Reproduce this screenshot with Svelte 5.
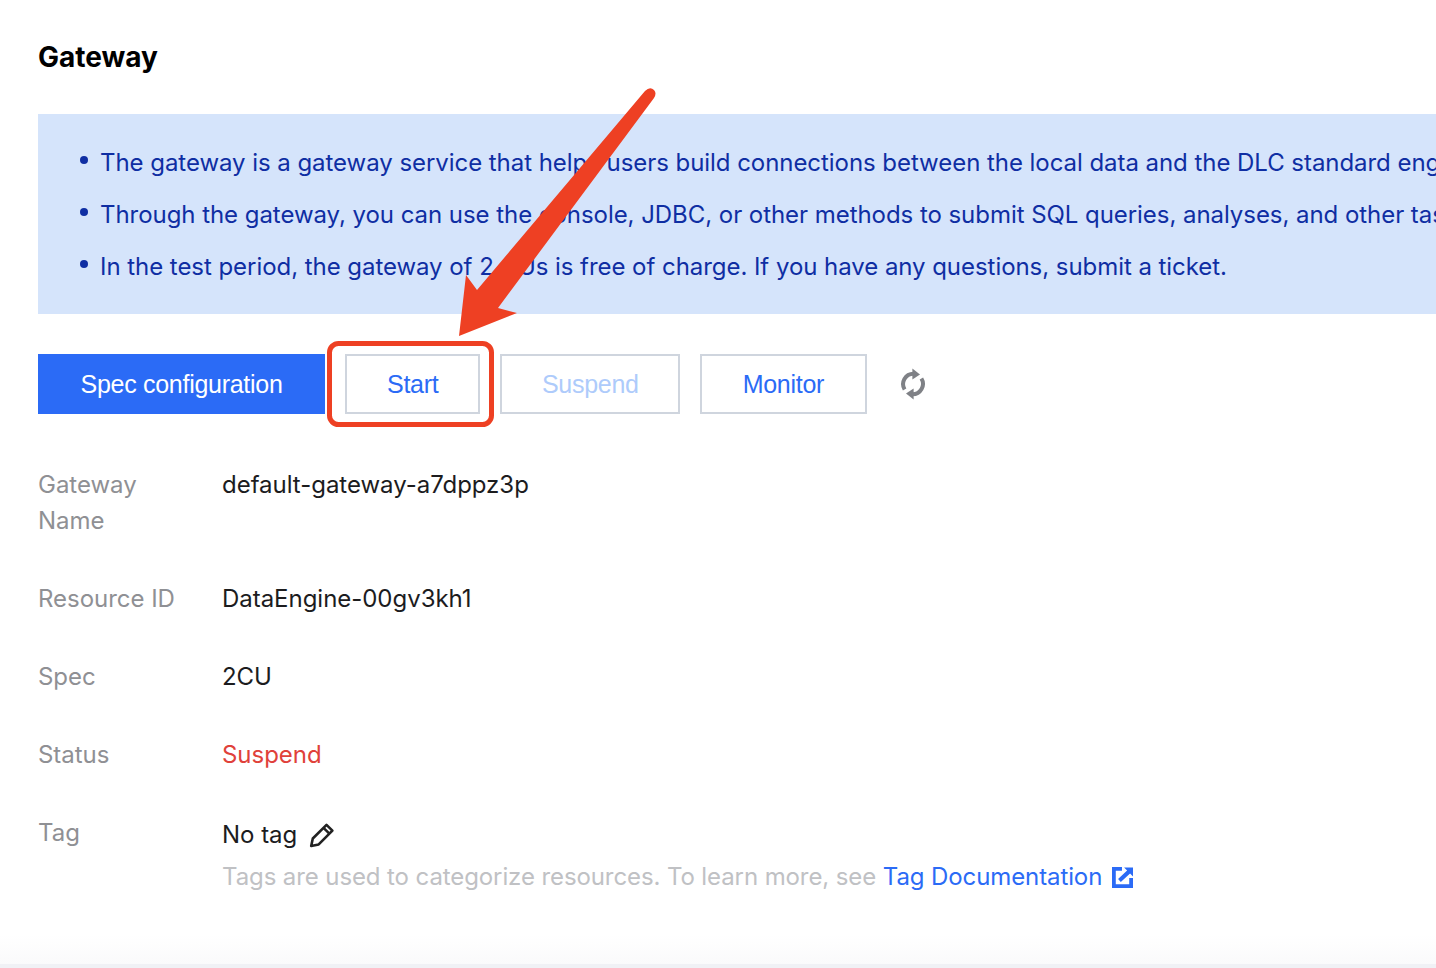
<script lang="ts">
  const notes = [
    "The gateway is a gateway service that helps users build connections between the local data and the DLC standard engine.",
    "Through the gateway, you can use the console, JDBC, or other methods to submit SQL queries, analyses, and other tasks.",
    "In the test period, the gateway of 2 CUs is free of charge. If you have any questions, submit a ticket."
  ];
</script>

<div class="page">
  <main class="panel">
    <h1>Gateway</h1>

    <ul class="notice">
      {#each notes as note}
        <li>{note}</li>
      {/each}
    </ul>

    <div class="toolbar">
      <button class="btn primary">Spec configuration</button>
      <button class="btn start">Start</button>
      <button class="btn" disabled>Suspend</button>
      <button class="btn">Monitor</button>
      <button class="refresh" aria-label="Refresh">
        <svg width="28" height="32" viewBox="0 0 28 32" fill="none">
          <path d="M5.6 21.5A10.4 10.4 0 0 1 14.5 5.7" stroke="#7f8186" stroke-width="4" />
          <path d="M22.4 10.5A10.4 10.4 0 0 1 13.5 26.3" stroke="#7f8186" stroke-width="4" />
          <path d="M13.4 0.6 21 6.4 13.4 11.6Z" fill="#7f8186" />
          <path d="M14.6 20.4 7 25.6 14.6 31.4Z" fill="#7f8186" />
        </svg>
      </button>
    </div>

    <dl class="details">
      <dt>Gateway Name</dt>
      <dd>default-gateway-a7dppz3p</dd>

      <dt>Resource ID</dt>
      <dd>DataEngine-00gv3kh1</dd>

      <dt>Spec</dt>
      <dd>2CU</dd>

      <dt>Status</dt>
      <dd class="suspended">Suspend</dd>

      <dt>Tag</dt>
      <dd class="tag-cell">
        <div class="tag-line">
          No tag
          <svg width="26" height="26" viewBox="0 0 26 26" fill="none" stroke="#222" stroke-width="2.6" stroke-linejoin="round">
            <path d="M2.2 24 3.8 16.5 17.5 2.8 23.4 8.7 9.7 22.4Z" />
            <path d="M14.5 5.8 20.4 11.7" />
          </svg>
        </div>
        <p class="hint">
          Tags are used to categorize resources. To learn more, see
          <span class="doc-link">Tag Documentation</span>
          <svg class="ext" width="21" height="21" viewBox="0 0 20 20">
            <path fill="#2b6bf6" d="M0 0h9.5v3.6H3.6v12.8h12.8V10.5H20V20H0Z" />
            <path fill="#2b6bf6" d="M11.5 0.5H20V9L17.2 6.3 8.4 14.2 5.8 11.4 14.4 3.4Z" />
          </svg>
        </p>
      </dd>
    </dl>
  </main>
  <div class="footer-strip"></div>

  <!-- annotation drawn on top of the screenshot -->
  <svg class="annotation" width="1436" height="968" viewBox="0 0 1436 968">
    <path
      fill="#ee4023"
      d="M459 336 466 275 477 290 645 91Q650 86 654 90 657 93 654 98L498 308 517 313Z"
    />
    <rect x="329.5" y="343.5" width="162" height="81" rx="9" fill="none" stroke="#ee4023" stroke-width="5" />
  </svg>
</div>

<style>
  :global(body) {
    margin: 0;
    background: #fff;
    overflow: hidden;
  }

  .page {
    position: relative;
    width: 1436px;
    height: 968px;
    overflow: hidden;
    display: flex;
    flex-direction: column;
    font-family: Inter, "Liberation Sans", sans-serif;
    font-size: 24px;
    line-height: 36px;
    letter-spacing: -0.03px;
    color: #1c1c1e;
  }

  .panel {
    flex: 1;
    padding: 38px 0 0 38px;
    background: linear-gradient(180deg, #fff 97%, #fafafb 100%);
  }

  h1 {
    margin: 0;
    font-size: 28px;
    line-height: 38px;
    font-weight: 700;
    color: #000;
  }

  .notice {
    list-style: none;
    margin: 38px 0 0;
    padding: 20px 0 22px 62px;
    height: 200px;
    box-sizing: border-box;
    background: #d5e4fb;
    color: #0f2ea3;
    white-space: nowrap;
    letter-spacing: -0.05px;
  }

  .notice li {
    position: relative;
    height: 52px;
    line-height: 58px;
  }

  .notice li::before {
    content: "";
    position: absolute;
    left: -20px;
    top: 22px;
    width: 8px;
    height: 8px;
    border-radius: 50%;
    background: #0f2ea3;
  }

  .toolbar {
    display: flex;
    align-items: center;
    gap: 20px;
    margin-top: 40px;
  }

  .btn {
    height: 60px;
    padding: 0 40.5px;
    border: 2px solid #cfd5de;
    background: #fff;
    color: #2b6bf6;
    font-family: "Liberation Sans", Arial, sans-serif;
    font-size: 25px;
    line-height: 36px;
    letter-spacing: -0.28px;
  }

  .btn.primary {
    border-color: #2b6bf6;
    background: #2b6bf6;
    color: #fff;
  }

  .btn.start {
    padding: 0 40px;
  }

  .btn:disabled {
    padding: 0 39.5px;
    color: #aecbfb;
  }

  .refresh {
    display: flex;
    margin-left: 12px;
    padding: 0;
    border: 0;
    background: none;
  }

  .details {
    display: grid;
    grid-template-columns: 184px 1fr;
    row-gap: 42px;
    margin: 53px 0 0;
  }

  dt {
    width: 150px;
    color: #8f9094;
  }

  dd {
    margin: 0;
  }

  .suspended {
    color: #e0413a;
  }

  .tag-cell {
    padding-top: 2px;
  }

  .tag-line {
    display: flex;
    align-items: center;
    gap: 12px;
  }

  .hint {
    margin: 6px 0 0;
    color: #c0c1c4;
    white-space: nowrap;
    letter-spacing: -0.1px;
  }

  .doc-link {
    color: #2b6bf6;
  }

  .ext {
    vertical-align: -3px;
    margin-left: 3px;
  }

  .footer-strip {
    height: 4px;
    background: #f0f1f5;
  }

  .annotation {
    position: absolute;
    inset: 0;
    pointer-events: none;
  }
</style>
